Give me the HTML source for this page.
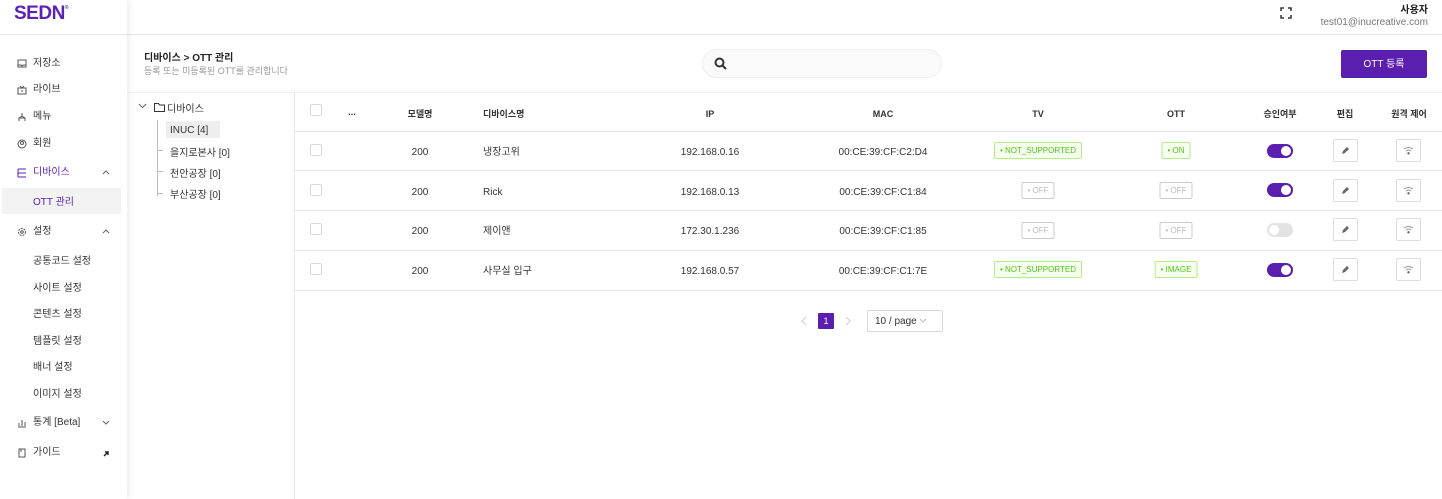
<!DOCTYPE html>
<html><head><meta charset="utf-8"><style>
*{box-sizing:border-box;margin:0;padding:0}
body{width:1442px;height:499px;overflow:hidden;background:#fff;font-family:"Liberation Sans","Noto Sans CJK KR",sans-serif;color:#333;font-size:10px;line-height:20px;position:relative}
.abs{position:absolute}
.side{left:0;top:0;width:127px;height:499px;background:#fff;box-shadow:2px 0 6px rgba(0,0,0,.08);z-index:2}
.logo{left:14px;top:3px;font-size:19px;line-height:22px;font-weight:bold;color:#5b22b8;letter-spacing:-0.5px}
.side .line{left:0;top:34px;width:127px;border-top:1px solid #e8e8e8}
.mi{position:absolute;left:17px;font-size:10px;color:#333;display:flex;align-items:center;height:14px;line-height:14px}
.mi .ic{width:10px;height:10px;margin-right:6px;display:inline-block}
.sub{position:absolute;left:33px;font-size:10px;color:#333}
.arr{position:absolute;left:101px;width:10px;height:14px}
.hdr{left:127px;top:34px;width:1315px;border-top:1px solid #e5e5e5}
.tree{left:294px;top:93px;height:406px;border-left:1px solid #e8e8e8}
.tl{position:absolute;left:295px;width:1147px;border-top:1px solid #e5e5e5}
.c{position:absolute;text-align:center;transform:translateX(-50%);font-size:10px;color:#333;white-space:nowrap}
.th{font-weight:bold;font-size:9px}
.cb{position:absolute;left:310px;width:12px;height:12px;border:1px solid #d9d9d9;border-radius:2px;background:#fff}
.tag{position:absolute;transform:translateX(-50%);height:17px;line-height:15px;font-size:8px;padding:0 5px;border-radius:2px;white-space:nowrap}
.g{background:#f6ffed;border:1px solid #b7eb8f;color:#52c41a}
.o{background:#fff;border:1px solid #ccc;color:#bbb}
.sw{position:absolute;left:1267px;width:26px;height:14px;border-radius:7px;background:#5b1fb0}
.sw::after{content:"";position:absolute;right:2px;top:2px;width:10px;height:10px;border-radius:50%;background:#fff}
.sw.off{background:#e3e3e3}
.sw.off::after{right:auto;left:2px}
.bt{position:absolute;width:25px;height:23px;border:1px solid #ddd;border-radius:2px;background:#fff;display:flex;align-items:center;justify-content:center}
</style></head><body>
<div class="abs side">
<div class="abs logo">SEDN<span style="font-size:5px;vertical-align:top;line-height:10px">®</span></div>
<div class="abs line"></div>
<div class="mi" style="top:57px"><svg class="ic" viewBox="0 0 10 10"><rect x="1" y="1" width="8" height="7" fill="none" stroke="#555"/><path d="M1 6h3l1 1 1-1h3" fill="none" stroke="#555"/></svg>저장소</div>
<div class="mi" style="top:83px"><svg class="ic" viewBox="0 0 10 10"><rect x="1" y="3" width="8" height="6" fill="none" stroke="#555"/><path d="M3 1l2 2 2-2M5 5v2" stroke="#555" fill="none"/></svg>라이브</div>
<div class="mi" style="top:110px"><svg class="ic" viewBox="0 0 10 10"><path d="M5 1v3M2 9V6h6v3M5 4L2 6M5 4l3 2" stroke="#555" fill="none"/></svg>메뉴</div>
<div class="mi" style="top:137px"><svg class="ic" viewBox="0 0 10 10"><circle cx="5" cy="5" r="4" fill="none" stroke="#555"/><circle cx="5" cy="4" r="1.5" fill="none" stroke="#555"/></svg>회원</div>
<div class="mi" style="top:166px;color:#5b22b8"><svg class="ic" viewBox="0 0 10 10"><path d="M1 1h8M1 5h8M1 9h8M1 1v8" stroke="#5b22b8" fill="none"/></svg>디바이스</div>
<svg class="arr" style="top:165px" viewBox="0 0 10 14"><path d="M2 9l3-3 3 3" stroke="#666" fill="none"/></svg>
<div class="abs" style="left:2px;top:188px;width:119px;height:26px;background:#f3f3f3"></div>
<div class="sub" style="top:193px;color:#5b22b8">OTT 관리</div>
<div class="mi" style="top:225px"><svg class="ic" viewBox="0 0 10 10"><circle cx="5" cy="5" r="3.5" fill="none" stroke="#555" stroke-dasharray="2 1"/><circle cx="5" cy="5" r="1.3" fill="none" stroke="#555"/></svg>설정</div>
<svg class="arr" style="top:224px" viewBox="0 0 10 14"><path d="M2 9l3-3 3 3" stroke="#666" fill="none"/></svg>
<div class="sub" style="top:252px">공통코드 설정</div>
<div class="sub" style="top:279px">사이트 설정</div>
<div class="sub" style="top:305px">콘텐츠 설정</div>
<div class="sub" style="top:332px">템플릿 설정</div>
<div class="sub" style="top:358px">배너 설정</div>
<div class="sub" style="top:385px">이미지 설정</div>
<div class="mi" style="top:416px"><svg class="ic" viewBox="0 0 10 10"><path d="M1 9h8M2 8V5M5 8V2M8 8V4" stroke="#555" fill="none"/></svg>통계 [Beta]</div>
<svg class="arr" style="top:415px" viewBox="0 0 10 14"><path d="M2 6l3 3 3-3" stroke="#666" fill="none"/></svg>
<div class="mi" style="top:446px"><svg class="ic" viewBox="0 0 10 10"><path d="M2 1h6v8H2z M4 1v3" stroke="#555" fill="none"/></svg>가이드</div>
<svg class="arr" style="top:446px" viewBox="0 0 10 14"><path d="M3 10l4-4M4 6h3v3" stroke="#222" stroke-width="1.4" fill="none"/></svg>
</div>
<div class="abs hdr"></div>
<svg class="abs" style="left:1280px;top:7px" width="12" height="12" viewBox="0 0 12 12"><path d="M1 4V1h3M8 1h3v3M11 8v3H8M4 11H1V8" stroke="#333" stroke-width="1.5" fill="none"/></svg>
<div class="abs" style="right:14px;top:5px;text-align:right;line-height:12px"><div style="font-weight:bold;font-size:10px;color:#222">사용자</div><div style="font-size:10px;color:#777">test01@inucreative.com</div></div>
<div class="abs" style="left:144px;top:49px;font-weight:bold;font-size:10px;color:#222">디바이스 &gt; OTT 관리</div>
<div class="abs" style="left:144px;top:61px;font-size:9px;color:#999">등록 또는 미등록된 OTT를 관리합니다</div>
<div class="abs" style="left:702px;top:49px;width:240px;height:29px;border:1px solid #eee;border-radius:15px;background:#fafafa"></div>
<svg class="abs" style="left:714px;top:57px" width="13" height="13" viewBox="0 0 13 13"><circle cx="5.5" cy="5.5" r="4" stroke="#333" stroke-width="2" fill="none"/><path d="M8.5 8.5l3.5 3.5" stroke="#333" stroke-width="2"/></svg>
<div class="abs" style="left:1341px;top:50px;width:86px;height:28px;background:#5b1fb0;color:#fff;border-radius:2px;text-align:center;line-height:29px;font-size:10px">OTT 등록</div>
<div class="abs" style="left:127px;top:92px;width:1315px;border-top:1px solid #eee"></div>
<div class="abs tree"></div>
<svg class="abs" style="left:138px;top:102px" width="9" height="8" viewBox="0 0 9 8"><path d="M1 2l3.5 3.5L8 2" stroke="#666" fill="none"/></svg>
<svg class="abs" style="left:154px;top:103px" width="11" height="9" viewBox="0 0 11 9"><path d="M.5 .5h4l1 1.5h5v6.5H.5z" stroke="#333" fill="none"/></svg>
<div class="abs" style="left:167px;top:100px;font-size:10px">디바이스</div>
<div class="abs" style="left:157px;top:120px;height:76px;border-left:1px solid #bbb"></div>
<div class="abs" style="left:157px;top:150px;width:6px;border-top:1px solid #bbb"></div>
<div class="abs" style="left:157px;top:171px;width:6px;border-top:1px solid #bbb"></div>
<div class="abs" style="left:157px;top:193px;width:6px;border-top:1px solid #bbb"></div>
<div class="abs" style="left:166px;top:121px;width:54px;height:17px;background:#eee"></div>
<div class="abs" style="left:170px;top:121px;font-size:10px">INUC [4]</div>
<div class="abs" style="left:170px;top:144px;font-size:10px">을지로본사 [0]</div>
<div class="abs" style="left:170px;top:165px;font-size:10px">천안공장 [0]</div>
<div class="abs" style="left:170px;top:186px;font-size:10px">부산공장 [0]</div>

<div class="tl" style="top:131px"></div><div class="tl" style="top:170px"></div><div class="tl" style="top:210px"></div><div class="tl" style="top:250px"></div><div class="tl" style="top:290px"></div>
<div class="cb" style="top:104px"></div>
<div class="c th" style="left:352px;top:102px">...</div>
<div class="c th" style="left:420px;top:104px">모델명</div>
<div class="abs th" style="left:483px;top:104px">디바이스명</div>
<div class="c th" style="left:710px;top:104px">IP</div>
<div class="c th" style="left:883px;top:104px">MAC</div>
<div class="c th" style="left:1038px;top:104px">TV</div>
<div class="c th" style="left:1176px;top:104px">OTT</div>
<div class="c th" style="left:1280px;top:104px">승인여부</div>
<div class="c th" style="left:1345px;top:104px">편집</div>
<div class="c th" style="left:1409px;top:104px">원격 제어</div>

<div class="cb" style="top:144px"></div><div class="c" style="left:420px;top:143px">200</div><div class="abs" style="left:483px;top:143px">냉장고위</div><div class="c" style="left:710px;top:143px">192.168.0.16</div><div class="c" style="left:883px;top:143px">00:CE:39:CF:C2:D4</div>
<div class="tag g" style="left:1038px;top:142px">• NOT_SUPPORTED</div><div class="tag g" style="left:1176px;top:142px">• ON</div><div class="sw" style="top:144px"></div>
<div class="cb" style="top:184px"></div><div class="c" style="left:420px;top:183px">200</div><div class="abs" style="left:483px;top:183px">Rick</div><div class="c" style="left:710px;top:183px">192.168.0.13</div><div class="c" style="left:883px;top:183px">00:CE:39:CF:C1:84</div>
<div class="tag o" style="left:1038px;top:182px">• OFF</div><div class="tag o" style="left:1176px;top:182px">• OFF</div><div class="sw" style="top:183px"></div>
<div class="cb" style="top:223px"></div><div class="c" style="left:420px;top:222px">200</div><div class="abs" style="left:483px;top:222px">제이앤</div><div class="c" style="left:710px;top:222px">172.30.1.236</div><div class="c" style="left:883px;top:222px">00:CE:39:CF:C1:85</div>
<div class="tag o" style="left:1038px;top:222px">• OFF</div><div class="tag o" style="left:1176px;top:222px">• OFF</div><div class="sw off" style="top:223px"></div>
<div class="cb" style="top:263px"></div><div class="c" style="left:420px;top:262px">200</div><div class="abs" style="left:483px;top:262px">사무실 입구</div><div class="c" style="left:710px;top:262px">192.168.0.57</div><div class="c" style="left:883px;top:262px">00:CE:39:CF:C1:7E</div>
<div class="tag g" style="left:1038px;top:261px">• NOT_SUPPORTED</div><div class="tag g" style="left:1176px;top:261px">• IMAGE</div><div class="sw" style="top:263px"></div>

<div class="bt" style="left:1333px;top:139px"><svg width="9" height="9" viewBox="0 0 9 9"><path d="M1 8l1-3 4-4 2 2-4 4z" fill="#666"/></svg></div>
<div class="bt" style="left:1333px;top:179px"><svg width="9" height="9" viewBox="0 0 9 9"><path d="M1 8l1-3 4-4 2 2-4 4z" fill="#666"/></svg></div>
<div class="bt" style="left:1333px;top:218px"><svg width="9" height="9" viewBox="0 0 9 9"><path d="M1 8l1-3 4-4 2 2-4 4z" fill="#666"/></svg></div>
<div class="bt" style="left:1333px;top:258px"><svg width="9" height="9" viewBox="0 0 9 9"><path d="M1 8l1-3 4-4 2 2-4 4z" fill="#666"/></svg></div>
<div class="bt" style="left:1396px;top:139px"><svg width="11" height="9" viewBox="0 0 11 9"><path d="M1 3q4.5-3 9 0M3 5q2.5-2 5 0" stroke="#999" fill="none"/><circle cx="5.5" cy="7.3" r="1.2" fill="#666"/></svg></div>
<div class="bt" style="left:1396px;top:179px"><svg width="11" height="9" viewBox="0 0 11 9"><path d="M1 3q4.5-3 9 0M3 5q2.5-2 5 0" stroke="#999" fill="none"/><circle cx="5.5" cy="7.3" r="1.2" fill="#666"/></svg></div>
<div class="bt" style="left:1396px;top:218px"><svg width="11" height="9" viewBox="0 0 11 9"><path d="M1 3q4.5-3 9 0M3 5q2.5-2 5 0" stroke="#999" fill="none"/><circle cx="5.5" cy="7.3" r="1.2" fill="#666"/></svg></div>
<div class="bt" style="left:1396px;top:258px"><svg width="11" height="9" viewBox="0 0 11 9"><path d="M1 3q4.5-3 9 0M3 5q2.5-2 5 0" stroke="#999" fill="none"/><circle cx="5.5" cy="7.3" r="1.2" fill="#666"/></svg></div>

<svg class="abs" style="left:800px;top:316px" width="8" height="10" viewBox="0 0 8 10"><path d="M6 1L2 5l4 4" stroke="#ccc" fill="none"/></svg>
<div class="abs" style="left:818px;top:313px;width:16px;height:16px;background:#5b1fb0;color:#fff;font-size:9px;text-align:center;line-height:16px;border-radius:1px">1</div>
<svg class="abs" style="left:844px;top:316px" width="8" height="10" viewBox="0 0 8 10"><path d="M2 1l4 4-4 4" stroke="#ccc" fill="none"/></svg>
<div class="abs" style="left:867px;top:310px;width:76px;height:22px;border:1px solid #d9d9d9;border-radius:2px;font-size:10px;line-height:21px;padding-left:7px">10 / page <svg width="8" height="6" viewBox="0 0 8 6"><path d="M1 1l3 3 3-3" stroke="#bbb" fill="none"/></svg></div>
</body></html>
